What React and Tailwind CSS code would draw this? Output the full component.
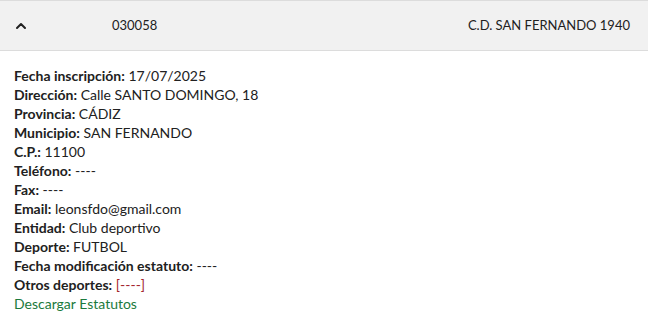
import { ChevronUp } from "lucide-react";

const campos = [
  ["Fecha inscripción", "17/07/2025"],
  ["Dirección", "Calle SANTO DOMINGO, 18"],
  ["Provincia", "CÁDIZ"],
  ["Municipio", "SAN FERNANDO"],
  ["C.P.", "11100"],
  ["Teléfono", "----"],
  ["Fax", "----"],
  ["Email", "leonsfdo@gmail.com"],
  ["Entidad", "Club deportivo"],
  ["Deporte", "FUTBOL"],
  ["Fecha modificación estatuto", "----"],
];

export default function App() {
  return (
    <div className="w-[648px] h-[326px] bg-white text-[#212121] font-['Lato',sans-serif] text-[14px]">
      {/* cabecera */}
      <div className="h-[51px] flex items-center bg-[#f1f1f1] border-y border-[#dcdcdc] text-[13px]">
        <div className="w-[112px] pl-[13px]">
          <ChevronUp className="h-4 w-4" strokeWidth={3} />
        </div>
        <span className="flex-1">030058</span>
        <span className="pr-[18px]">C.D. SAN FERNANDO 1940</span>
      </div>

      {/* detalle */}
      <div className="px-[14px] pt-[15px] leading-[19px]">
        {campos.map(([k, v]) => (
          <div key={k}>
            <b className="font-bold">{k}:</b> {v}
          </div>
        ))}
        <div>
          <b className="font-bold">Otros deportes:</b>{" "}
          <span className="text-[#a4262c]">[----]</span>
        </div>
        <a href="#" className="text-[#1b7a3c]">
          Descargar Estatutos
        </a>
      </div>
    </div>
  );
}
